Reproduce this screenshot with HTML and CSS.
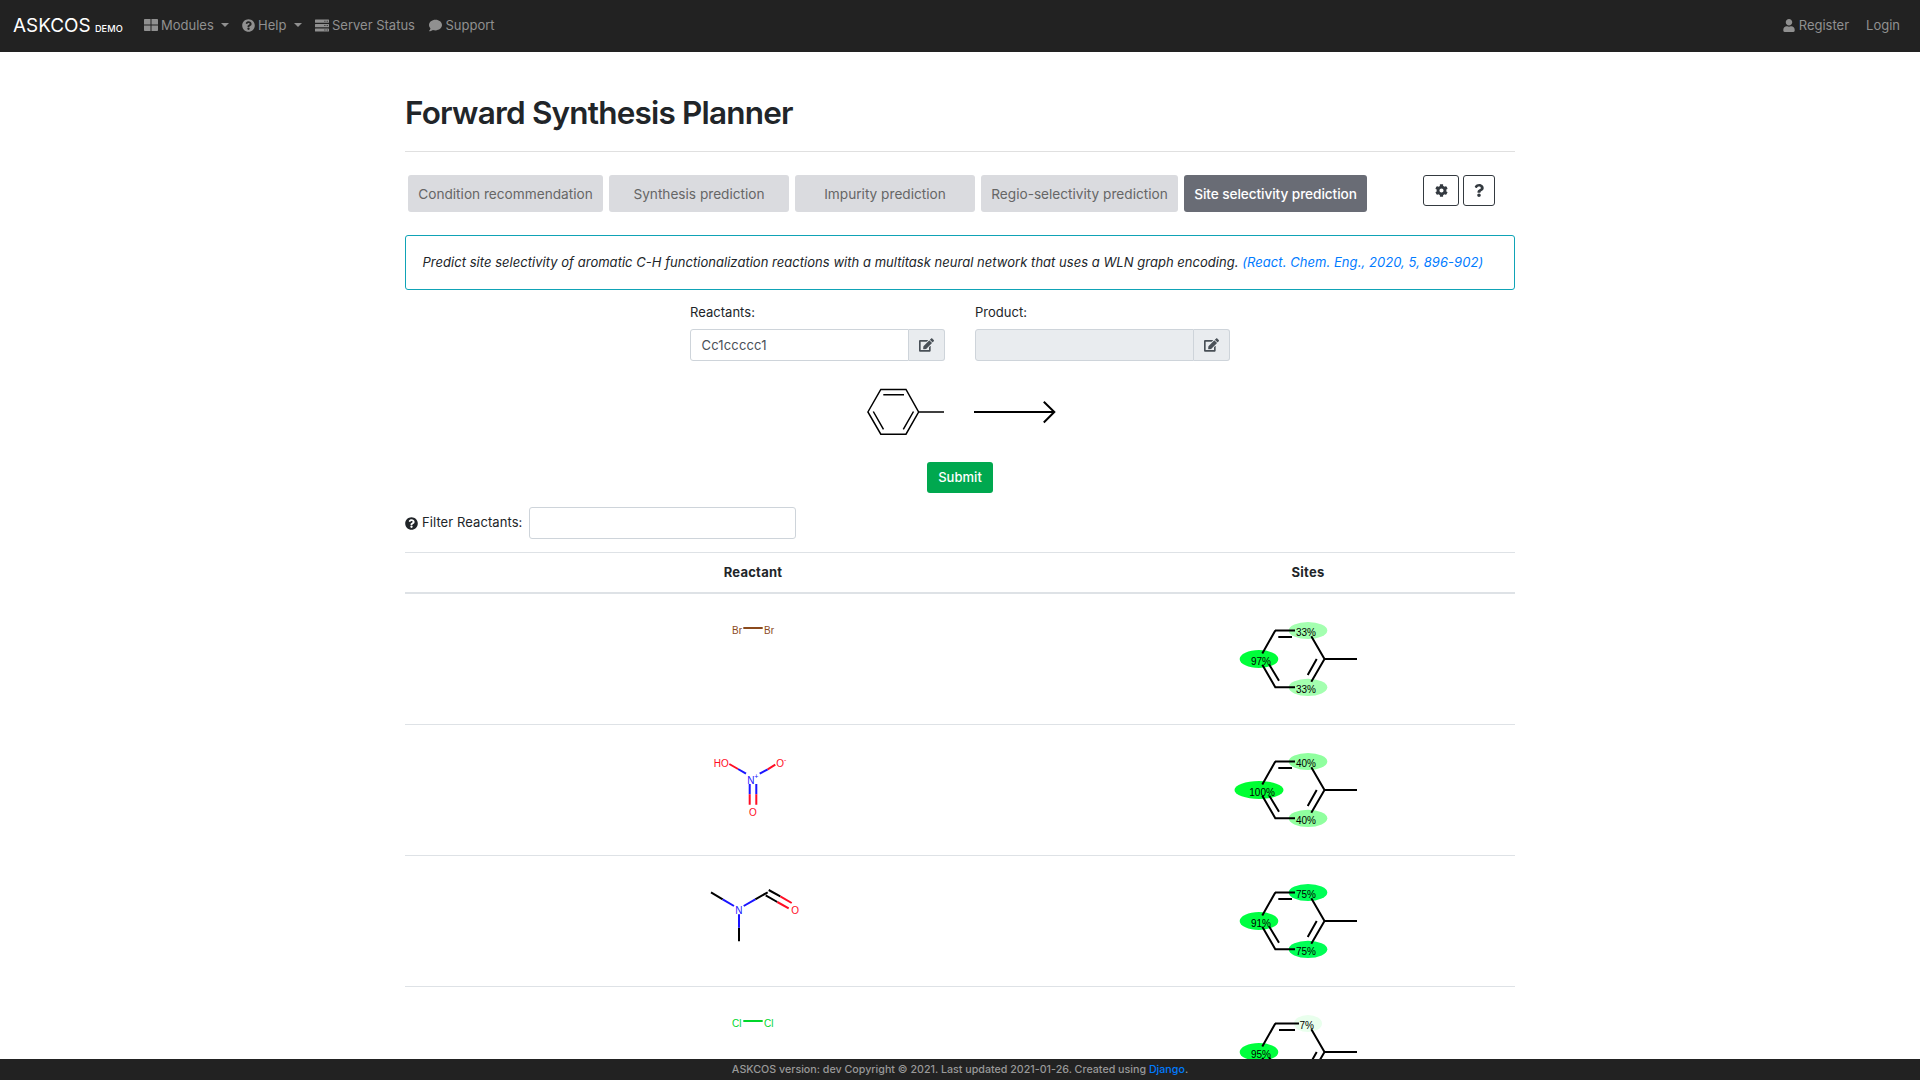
FILE: index.html
```html
<!DOCTYPE html>
<html lang="en">
<head>
<meta charset="utf-8">
<title>ASKCOS - Forward Synthesis Planner</title>
<link rel="stylesheet" href="styles.css">
</head>
<body>
<svg class="defs" aria-hidden="true">
  <symbol id="i-grid" viewBox="0 0 14 12"><path d="M0 .8Q0 0 .8 0H6.5V5.5H0zM7.5 0H13.2Q14 0 14 .8V5.5H7.5zM0 6.5H6.5V12H.8Q0 12 0 11.2zM7.5 6.5H14V11.2Q14 12 13.2 12H7.5z"/></symbol>
  <symbol id="i-help" viewBox="0 0 512 512"><path d="M504 256c0 136.997-111.043 248-248 248S8 392.997 8 256C8 119.083 119.043 8 256 8s248 111.083 248 248zM262.655 90c-54.497 0-89.255 22.957-116.549 63.758-3.536 5.286-2.353 12.415 2.715 16.258l34.699 26.31c5.205 3.947 12.621 3.008 16.665-2.122 17.864-22.658 30.113-35.797 57.303-35.797 20.429 0 45.698 13.148 45.698 32.958 0 14.976-12.363 22.667-32.534 33.976C247.128 238.528 216 254.941 216 296v4c0 6.627 5.373 12 12 12h56c6.627 0 12-5.373 12-12v-1.333c0-28.462 83.186-29.647 83.186-106.667 0-58.002-60.165-102-116.531-102zM256 338c-25.365 0-46 20.635-46 46 0 25.364 20.635 46 46 46s46-20.636 46-46c0-25.365-20.635-46-46-46z"/></symbol>
  <symbol id="i-server" viewBox="0 0 14 13"><path fill-rule="evenodd" d="M.5 .5h13q.5 0 .5.5v2.200q0 .5-.5.5H.5Q0 3.700 0 3.200V1Q0 .5.5 .5zM9.400 1.700h1v1h-1zM11.700 1.700h1v1h-1zM.5 4.900h13q.5 0 .5.5v2.300q0 .5-.5.5H.5Q0 8.200 0 7.700V5.400Q0 4.900.5 4.900zM9.400 6.100h1v1h-1zM11.700 6.100h1v1h-1zM.5 9.400h13q.5 0 .5.5v2.200q0 .5-.5.5H.5Q0 12.600 0 12.100V9.900Q0 9.400.5 9.400zM9.400 10.500h1v1h-1zM11.700 10.500h1v1h-1z"/></symbol>
  <symbol id="i-comment" viewBox="0 0 512 512"><path d="M256 32C114.600 32 0 125.100 0 240c0 49.600 21.400 95 57 130.700C44.500 421.100 2.700 466 2.200 466.500c-2.200 2.300-2.800 5.700-1.500 8.700S4.800 480 8 480c66.300 0 116-31.800 140.600-51.400 32.700 12.300 69 19.400 107.400 19.400 141.400 0 256-93.100 256-208S397.400 32 256 32z"/></symbol>
  <symbol id="i-user" viewBox="0 0 448 512"><path d="M224 256c70.700 0 128-57.300 128-128S294.700 0 224 0 96 57.300 96 128s57.300 128 128 128zm89.600 32h-16.700c-22.200 10.200-46.900 16-72.900 16s-50.600-5.800-72.900-16h-16.700C60.200 288 0 348.200 0 422.400V464c0 26.500 21.500 48 48 48h352c26.500 0 48-21.500 48-48v-41.600c0-74.200-60.200-134.400-134.400-134.400z"/></symbol>
  <symbol id="i-edit" viewBox="0 0 576 512"><path d="M402.600 83.200l90.200 90.200c3.800 3.800 3.800 10 0 13.800L274.400 405.600l-92.800 10.300c-12.400 1.400-22.900-9.100-21.500-21.500l10.300-92.800L388.800 83.200c3.800-3.800 10-3.800 13.800 0zm162-22.900l-48.800-48.800c-15.200-15.200-39.900-15.200-55.200 0l-35.400 35.400c-3.800 3.800-3.800 10 0 13.800l90.200 90.200c3.800 3.800 10 3.800 13.800 0l35.400-35.400c15.200-15.300 15.200-40 0-55.200zM384 346.200V448H64V128h229.800c3.200 0 6.200-1.300 8.500-3.500l40-40c7.600-7.600 2.200-20.500-8.500-20.500H48C21.500 64 0 85.500 0 112v352c0 26.500 21.500 48 48 48h352c26.500 0 48-21.500 48-48V306.200c0-10.700-12.900-16-20.500-8.500l-40 40c-2.200 2.300-3.500 5.300-3.500 8.500z"/></symbol>
  <symbol id="i-cog" viewBox="0 0 512 512"><path d="M487.400 315.700l-42.600-24.600c4.300-23.200 4.300-47 0-70.200l42.600-24.600c4.900-2.800 7.100-8.600 5.500-14-11.100-35.600-30-67.800-54.700-94.600-3.800-4.100-10-5.100-14.800-2.300L380.800 110c-17.900-15.400-38.500-27.300-60.800-35.100V25.800c0-5.600-3.900-10.500-9.400-11.700-36.700-8.200-74.300-7.800-109.200 0-5.500 1.200-9.400 6.100-9.400 11.700V75c-22.200 7.900-42.800 19.800-60.800 35.100L88.700 85.500c-4.900-2.800-11-1.900-14.800 2.300-24.700 26.700-43.600 58.900-54.700 94.600-1.700 5.400.6 11.200 5.500 14L67.300 221c-4.300 23.200-4.300 47 0 70.200l-42.600 24.600c-4.900 2.800-7.100 8.600-5.500 14 11.100 35.600 30 67.800 54.700 94.600 3.800 4.100 10 5.100 14.800 2.300l42.600-24.600c17.900 15.400 38.500 27.300 60.800 35.100v49.200c0 5.600 3.900 10.500 9.400 11.700 36.700 8.200 74.300 7.800 109.200 0 5.500-1.200 9.400-6.100 9.400-11.700v-49.200c22.200-7.900 42.800-19.800 60.800-35.100l42.600 24.600c4.900 2.800 11 1.900 14.800-2.300 24.700-26.700 43.600-58.900 54.700-94.600 1.500-5.500-.7-11.300-5.600-14.100zM256 336c-44.100 0-80-35.900-80-80s35.900-80 80-80 80 35.900 80 80-35.900 80-80 80z"/></symbol>
  <symbol id="i-question" viewBox="0 0 384 512"><path d="M202.021 0C122.202 0 70.503 32.703 29.914 91.026c-7.363 10.580-5.093 25.086 5.178 32.874l43.138 32.709c10.373 7.865 25.132 6.026 33.253-4.148 25.049-31.381 43.630-49.449 82.757-49.449 30.764 0 68.816 19.799 68.816 49.631 0 22.552-18.617 34.134-48.993 51.164-35.423 19.860-82.299 44.576-82.299 106.405V320c0 13.255 10.745 24 24 24h72.471c13.255 0 24-10.745 24-24v-5.773c0-42.860 125.268-44.645 125.268-160.627C377.504 66.256 286.902 0 202.021 0zM192 373.459c-38.196 0-69.271 31.075-69.271 69.271 0 38.195 31.075 69.270 69.271 69.270s69.271-31.075 69.271-69.271-31.075-69.270-69.271-69.270z"/></symbol>
  <!-- toluene skeleton shared by the site-selectivity rows -->
  <symbol id="ring-rest" viewBox="0 0 140 130"><path d="M24.300 59.500 37.300 36.500M24.300 70.700 37.300 93.300H57M31.300 70.700 41 86.700M73.300 42.300 86.500 65 73.300 87.700M86.500 65H119M78.700 65 69.700 81"/></symbol>
</svg>

<nav class="navbar">
  <a class="brand">ASKCOS <small>DEMO</small></a>
  <a class="item modules"><svg class="ico grid"><use href="#i-grid"/></svg>Modules<i class="caret"></i></a>
  <a class="item help"><svg class="ico round"><use href="#i-help"/></svg>Help<i class="caret"></i></a>
  <a class="item status"><svg class="ico server"><use href="#i-server"/></svg>Server Status</a>
  <a class="item support"><svg class="ico round"><use href="#i-comment"/></svg>Support</a>
  <div class="account">
    <a class="item"><svg class="ico user"><use href="#i-user"/></svg>Register</a>
    <a class="item">Login</a>
  </div>
</nav>

<main class="container">
  <h1>Forward Synthesis Planner</h1>
  <div class="toolbar">
    <div class="tabs">
      <a class="tab t1">Condition recommendation</a>
      <a class="tab t2">Synthesis prediction</a>
      <a class="tab t2">Impurity prediction</a>
      <a class="tab t3">Regio-selectivity prediction</a>
      <a class="tab t4 active">Site selectivity prediction</a>
    </div>
    <div class="tools">
      <button class="tool"><svg class="cog"><use href="#i-cog"/></svg></button>
      <button class="tool narrow"><svg class="question"><use href="#i-question"/></svg></button>
    </div>
  </div>

  <p class="notice">Predict site selectivity of aromatic C-H functionalization reactions with a multitask neural network that uses a WLN graph encoding. <a>(React. Chem. Eng., 2020, 5, 896-902)</a></p>

  <div class="fields">
    <div class="field">
      <label>Reactants:</label>
      <div class="group"><div class="input">Cc1ccccc1</div><div class="addon"><svg class="edit"><use href="#i-edit"/></svg></div></div>
    </div>
    <div class="field">
      <label>Product:</label>
      <div class="group"><div class="input disabled"></div><div class="addon"><svg class="edit"><use href="#i-edit"/></svg></div></div>
    </div>
  </div>

  <svg class="reaction" width="190" height="60" viewBox="866 382 190 60">
    <path class="thin" d="M867.900 412 880.800 389.500H906L918.600 412 906 434.200H880.800ZM918.600 412H944M883.300 394.800H904M873.300 411.500 883.500 429.300M913.500 411.500 903.300 429.300"/>
    <path class="arrow" d="M974 412H1054M1043.800 401.700 1054.300 412 1043.800 422.500"/>
  </svg>

  <button class="submit">Submit</button>

  <div class="filter"><svg class="round"><use href="#i-help"/></svg><label>Filter Reactants:</label><div class="input filter-input"></div></div>

  <table>
    <thead><tr><th>Reactant</th><th>Sites</th></tr></thead>
    <tbody>
      <tr>
        <td><svg class="mol" viewBox="693 594 120 130">
          <path class="br" d="M743.300 628H762.700"/>
          <text class="br" x="732" y="634.300">Br</text><text class="br" x="764" y="634.300">Br</text>
        </svg></td>
        <td><svg class="mol site" viewBox="0 0 140 130">
          <ellipse fill="#a4ffb0" cx="70" cy="36.500" rx="19.300" ry="8.600"/><ellipse fill="#a4ffb0" cx="70" cy="93.300" rx="19.300" ry="8.600"/><ellipse fill="#00ff3a" cx="21" cy="65" rx="19.300" ry="8.900"/>
          <use href="#ring-rest" width="140" height="130"/><path d="M37 36.500H57M40.300 43H54"/>
          <text x="58" y="42">33%</text><text x="58" y="99">33%</text><text x="12.900" y="71">97%</text>
        </svg></td>
      </tr>
      <tr>
        <td><svg class="mol" viewBox="693 725 120 130">
          <path class="n" d="M738 769 746 773.700M759.700 773.700 767.700 769.300M749.700 784V794.300M756.300 784V794.300"/>
          <path class="o" d="M729.300 764 738 769M767.700 769.300 775.300 764.700M749.700 794.300V804.700M756.300 794.300V804.700"/>
          <text class="o" x="713.700" y="767">HO</text><text class="o" x="776.300" y="767">O</text><text class="o sup" x="783.900" y="761.500">-</text>
          <text class="n" x="747.200" y="784.200">N</text><text class="n sup" x="754.200" y="778.500">+</text><text class="o" x="749" y="816">O</text>
        </svg></td>
        <td><svg class="mol site" viewBox="0 0 140 130">
          <ellipse fill="#90ff9f" cx="70" cy="36.500" rx="19.300" ry="8.600"/><ellipse fill="#90ff9f" cx="70" cy="93.300" rx="19.300" ry="8.600"/><ellipse fill="#00ff33" cx="21" cy="65" rx="24.500" ry="8.900"/>
          <use href="#ring-rest" width="140" height="130"/><path d="M37 36.500H57M40.300 43H54"/>
          <text x="58" y="42">40%</text><text x="58" y="99">40%</text><text x="11.300" y="71">100%</text>
        </svg></td>
      </tr>
      <tr>
        <td><svg class="mol" viewBox="693 856 120 130">
          <path d="M711 892.300 722.700 899.300M739 927.700V941.300M755.300 899.300 767.700 892.300M768.700 890 780.300 896.300M765.700 895.300 777.300 902"/>
          <path class="n" d="M722.700 899.300 734 906M739 914.300V927.700M743.700 906 755.300 899.300"/>
          <path class="o" d="M780.300 896.300 791.700 903M777.300 902 788.700 908.300"/>
          <text class="n" x="735.200" y="914.200">N</text><text class="o" x="791.200" y="914.300">O</text>
        </svg></td>
        <td><svg class="mol site" viewBox="0 0 140 130">
          <ellipse fill="#00ff56" cx="70" cy="36.500" rx="19.300" ry="8.600"/><ellipse fill="#00ff56" cx="70" cy="93.300" rx="19.300" ry="8.600"/><ellipse fill="#00ff42" cx="21" cy="65" rx="19.300" ry="8.900"/>
          <use href="#ring-rest" width="140" height="130"/><path d="M37 36.500H57M40.300 43H54"/>
          <text x="58" y="42">75%</text><text x="58" y="99">75%</text><text x="12.900" y="71">91%</text>
        </svg></td>
      </tr>
      <tr>
        <td><svg class="mol" viewBox="693 987 120 130">
          <path class="cl" d="M743.300 1021H762.700"/>
          <text class="cl" x="732" y="1027.300">Cl</text><text class="cl" x="764" y="1027.300">Cl</text>
        </svg></td>
        <td><svg class="mol site" viewBox="0 0 140 130">
          <ellipse fill="#e9ffed" cx="70" cy="36.500" rx="14" ry="8.600"/><ellipse fill="#00ff3d" cx="21" cy="65" rx="19.300" ry="8.900"/>
          <use href="#ring-rest" width="140" height="130"/><path d="M37 36.500H61M41 43H57"/>
          <text x="61.500" y="42">7%</text><text x="12.900" y="71">95%</text>
        </svg></td>
      </tr>
    </tbody>
  </table>
</main>

<footer>ASKCOS version: dev Copyright © 2021. Last updated 2021-01-26. Created using <a>Django</a>.</footer>
</body>
</html>
```
FILE: styles.css
```css
* { box-sizing: border-box; }
html, body { height: 100%; }
body {
  margin: 0;
  overflow: hidden;
  display: flex;
  flex-direction: column;
  background: #fff;
  color: #212529;
  font: 13px/21px Inter, "Liberation Sans", sans-serif;
  letter-spacing: .03px;
}
.defs { width: 0; height: 0; position: absolute; }
svg { fill: currentColor; display: block; flex: none; }
button { font: inherit; padding: 0; letter-spacing: inherit; }

.navbar {
  flex: none;
  height: 52px;
  padding: 0 20px 2px 13px;
  display: flex;
  align-items: center;
  background: #222;
  color: #909090;
}
.brand { width: 130.500px; padding-top: 3px; color: #fff; font-size: 18.900px; letter-spacing: 0; white-space: nowrap; }
.brand small { font-size: 9.200px; font-weight: 500; letter-spacing: .1px; margin-left: -1px; }
.item { display: flex; align-items: center; white-space: nowrap; letter-spacing: 0; }
.modules { width: 98px; }
.help { width: 73.500px; }
.status { width: 114px; }
.ico { margin-right: 3.500px; }
.grid { width: 14px; height: 12px; }
.round { width: 13px; height: 13px; }
.server { width: 14px; height: 13px; margin-right: 3px; }
.user { width: 12px; height: 13px; }
.caret { margin-left: 7.500px; border: 4px solid transparent; border-top-color: currentColor; border-bottom: 0; }
.account { margin-left: auto; display: flex; gap: 17px; }

.container {
  flex: 1;
  min-height: 0;
  width: 1110px;
  margin: 0 auto;
  padding-top: 39px;
  overflow: hidden;
}
h1 {
  margin: 0;
  height: 61px;
  border-bottom: 1px solid #e0e0e0;
  font-weight: 600;
  font-size: 31.500px;
  line-height: 43px;
  letter-spacing: -.8px;
}
.toolbar { display: flex; justify-content: space-between; padding: 23px 20px 23px 3px; height: 83px; }
.tabs, .tools { display: flex; gap: 6px; }
.tools { gap: 4px; }
.tab {
  height: 37px;
  border-radius: 3px;
  background: #dadbdf;
  color: #666;
  font-size: 13.650px;
  line-height: 38px;
  letter-spacing: 0;
  text-align: center;
}
.t1 { width: 195px; }
.t2 { width: 180px; }
.t3 { width: 197px; }
.t4 { width: 183px; }
.active { background: #696c75; color: #fff; font-weight: 500; letter-spacing: -.07px; }
.tool {
  width: 36px;
  height: 31px;
  display: flex;
  align-items: center;
  justify-content: center;
  background: #fff;
  border: 1px solid #343a40;
  border-radius: 3px;
  color: #343a40;
}
.narrow { width: 32px; }
.cog { width: 13px; height: 13px; }
.question { width: 10px; height: 13px; }

.notice {
  margin: 0;
  height: 55px;
  padding: 16px 16.500px;
  border: 1px solid #0fa3b6;
  border-radius: 3px;
  font-style: italic;
  line-height: 20px;
  white-space: nowrap;
}
.notice a { color: #007bff; letter-spacing: .06px; }

.fields { display: flex; justify-content: center; gap: 30px; padding-top: 12px; }
.field { width: 255px; }
.field label { display: block; height: 27px; }
.group { display: flex; }
.input {
  flex: 1;
  height: 32px;
  padding: 0 10.500px;
  border: 1px solid #ced4da;
  border-radius: 3px;
  line-height: 31px;
  color: #495057;
  letter-spacing: .15px;
}
.group .input { border-radius: 3px 0 0 3px; }
.disabled, .addon { background: #e9ecef; }
.addon {
  width: 36px;
  display: flex;
  align-items: center;
  justify-content: center;
  border: 1px solid #ced4da;
  border-left: 0;
  border-radius: 0 3px 3px 0;
  color: #495057;
}
.edit { width: 15px; height: 14px; }

.reaction { margin: 21px 0 20px 461px; fill: none; stroke: #000; }
.thin { stroke-width: 1.500px; }
.arrow { stroke-width: 2px; }

.submit {
  display: block;
  width: 66px;
  height: 31px;
  margin: 0 auto;
  border: 0;
  border-radius: 3px;
  background: #00a84f;
  color: #fff;
  font-weight: 500;
}
.filter { display: flex; align-items: center; margin-top: 14px; height: 32px; }
.filter label { width: 107px; margin-left: 4px; padding-bottom: 1px; letter-spacing: .08px; }
.filter-input { flex: none; width: 267px; }

table {
  width: 100%;
  margin-top: 13px;
  border-collapse: separate;
  border-spacing: 0;
  table-layout: fixed;
}
th {
  height: 42px;
  padding: 0;
  border-top: 1px solid #dee2e6;
  border-bottom: 2px solid #dee2e6;
  font-weight: 700;
  letter-spacing: .25px;
}
th:first-child { width: 696px; }
td { height: 131px; padding: 0; border-bottom: 1px solid #dee2e6; }
.mol { width: 120px; height: 130px; margin: 0 auto; overflow: visible; stroke-width: 2px; font: 10px "Liberation Sans", Arial, sans-serif; letter-spacing: 0; }
.site { width: 140px; }
.mol path, .site use { stroke: #000; fill: none; }
#ring-rest { overflow: visible; }
.site ellipse { stroke: none; }
.mol text { fill: #000; stroke: none; }
.mol .sup { font-size: 7px; }
.mol path.br { stroke: #8b4a1c; }
.mol text.br { fill: #8b4a1c; }
.mol path.n { stroke: #1a14ff; }
.mol text.n { fill: #1a14ff; }
.mol path.o { stroke: #ff0d24; }
.mol text.o { fill: #ff0d24; }
.mol path.cl { stroke: #00d62b; }
.mol text.cl { fill: #00d62b; }

footer {
  flex: none;
  height: 21px;
  background: #222;
  color: #999;
  font-size: 10.700px;
  font-weight: 500;
  line-height: 21px;
  letter-spacing: 0;
  text-align: center;
}
footer a { color: #007bff; }
```
